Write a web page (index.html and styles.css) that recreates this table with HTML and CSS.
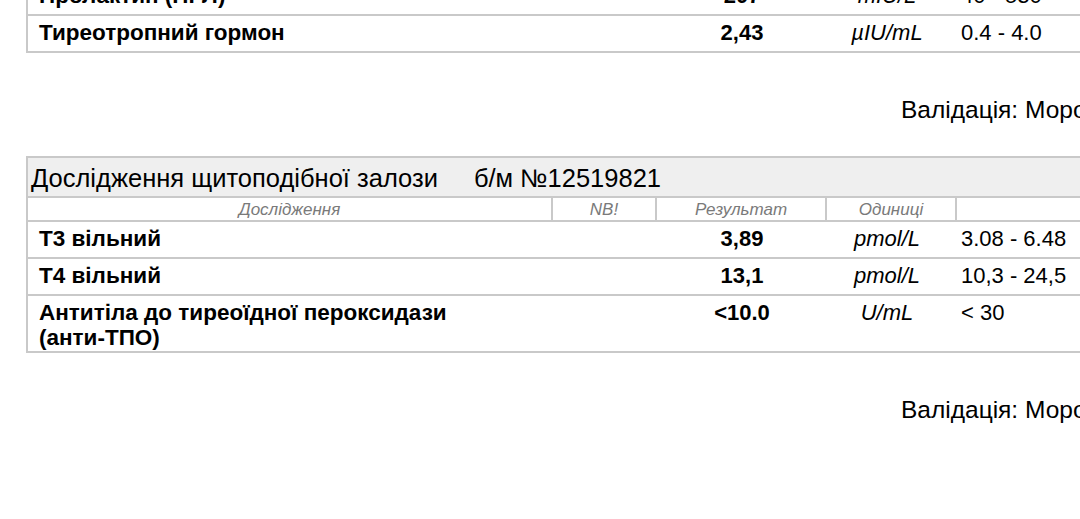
FILE: index.html
```html
<!DOCTYPE html>
<html lang="uk">
<head>
  <meta charset="UTF-8" />
  <meta name="viewport" content="width=device-width, initial-scale=1.0"/>
  <title>Результати досліджень</title>
  <link rel="stylesheet" href="styles.css">
</head>
<body>
  <div class="page">
    <!-- Hormones (tail of previous section) -->
    <table class="results prev">
      <colgroup>
        <col class="c-name"><col class="c-nb"><col class="c-value"><col class="c-unit"><col class="c-range">
      </colgroup>
      <tr>
        <td class="name">Пролактин (ПРЛ)</td>
        <td></td>
        <td class="value">207</td>
        <td class="unit">mIU/L</td>
        <td class="range">40 - 530</td>
      </tr>
      <tr>
        <td class="name">Тиреотропний гормон</td>
        <td></td>
        <td class="value">2,43</td>
        <td class="unit">µIU/mL</td>
        <td class="range">0.4 - 4.0</td>
      </tr>
    </table>

    <p class="validation">Валідація: Морозова О.В.</p>

    <!-- Thyroid section -->
    <table class="results">
      <colgroup>
        <col class="c-name"><col class="c-nb"><col class="c-value"><col class="c-unit"><col class="c-range">
      </colgroup>
      <tr class="title">
        <td colspan="5">Дослідження щитоподібної залози<span class="sample">б/м №12519821</span></td>
      </tr>
      <tr class="head">
        <th>Дослідження</th>
        <th>NB!</th>
        <th>Результат</th>
        <th>Одиниці</th>
        <th></th>
      </tr>
      <tr>
        <td class="name">Т3 вільний</td>
        <td></td>
        <td class="value">3,89</td>
        <td class="unit">pmol/L</td>
        <td class="range">3.08 - 6.48</td>
      </tr>
      <tr>
        <td class="name">Т4 вільний</td>
        <td></td>
        <td class="value">13,1</td>
        <td class="unit">pmol/L</td>
        <td class="range">10,3 - 24,5</td>
      </tr>
      <tr>
        <td class="name">Антитіла до тиреоїдної пероксидази<br>(анти-ТПО)</td>
        <td></td>
        <td class="value">&lt;10.0</td>
        <td class="unit">U/mL</td>
        <td class="range">&lt; 30</td>
      </tr>
    </table>

    <p class="validation">Валідація: Морозова О.В.</p>
  </div>
</body>
</html>
```

FILE: styles.css
```css
* {
  box-sizing: border-box;
}
html, body {
  margin: 0;
  padding: 0;
  background: #fff;
  overflow: hidden;
}
body {
  font-family: "Liberation Sans", Arial, sans-serif;
  color: #000;
  width: 1080px;
  height: 519px;
}
.page {
  padding-left: 26px;
  width: 1200px;
}

.results {
  table-layout: fixed;
  width: 1160px;
  border-collapse: separate;
  border-spacing: 0;
  border-left: 2px solid #c9c9c9;
  border-top: 2px solid #c9c9c9;
}
.results.prev {
  margin-top: -23px;
}
.c-name { width: 525px; }
.c-nb { width: 104px; }
.c-value { width: 170px; }
.c-unit { width: 130px; }
.c-range { width: 229px; }

.results td {
  border-bottom: 2px solid #c9c9c9;
  padding: 4px 0 1px;
  height: 37px;
  font-size: 22px;
  line-height: 25px;
  vertical-align: top;
}
.results td.name {
  font-size: 22.5px;
  font-weight: bold;
  padding-left: 11px;
  white-space: nowrap;
}
.results td.value {
  font-weight: bold;
  text-align: center;
}
.results td.unit {
  font-style: italic;
  text-align: center;
  padding-right: 10px;
}
.results td.range {
  padding-left: 4px;
  white-space: nowrap;
}

.title td {
  background: #efefef;
  height: 40px;
  padding: 6px 0 0 3px;
  font-size: 25.5px;
  line-height: 28px;
  white-space: nowrap;
}
.sample {
  margin-left: 36px;
}

.head th {
  height: 24px;
  padding: 0;
  font-size: 17px;
  line-height: 21px;
  font-weight: normal;
  font-style: italic;
  color: #7a7a7a;
  text-align: center;
  border-bottom: 2px solid #c9c9c9;
  border-right: 2px solid #c9c9c9;
}

.validation {
  margin: 44px 0 33px;
  padding-left: 875px;
  font-size: 24.5px;
  line-height: 26px;
  white-space: nowrap;
}
```
